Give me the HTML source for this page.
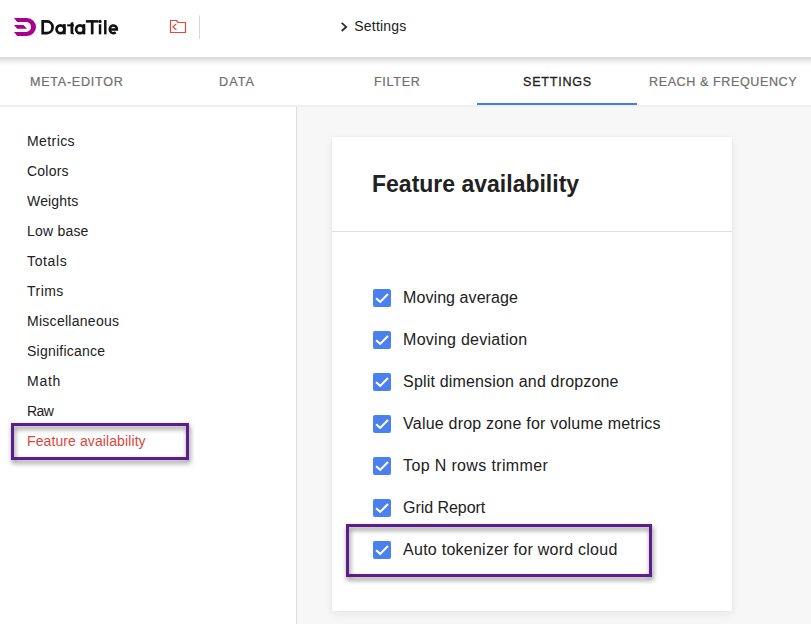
<!DOCTYPE html>
<html>
<head>
<meta charset="utf-8">
<title>DataTile Settings</title>
<style>
*{box-sizing:border-box;margin:0;padding:0}
html,body{width:811px;height:624px;overflow:hidden;background:#fff}
body{font-family:"Liberation Sans",sans-serif;color:#212121;position:relative;-webkit-font-smoothing:antialiased}
.abs{position:absolute;white-space:nowrap}
#header{position:absolute;left:0;top:0;width:811px;height:57px;background:#fff;z-index:5}
#hshadow{position:absolute;left:0;top:57px;width:811px;height:10px;z-index:4;background:linear-gradient(to bottom,rgba(0,0,0,.15) 0,rgba(0,0,0,.135) 1.5px,rgba(0,0,0,.095) 3px,rgba(0,0,0,.05) 5px,rgba(0,0,0,.02) 7px,rgba(0,0,0,.005) 9px,rgba(0,0,0,0) 10px)}
#tabs{position:absolute;left:0;top:57px;width:811px;height:48px;background:#fff;z-index:3}
#tabline{position:absolute;left:0;top:105px;width:811px;height:2px;background:#f0f0f0;z-index:3}
.tab{position:absolute;top:0;transform:translateY(.6px) scaleX(.93);transform-origin:0 0;height:48px;line-height:48px;font-size:13.5px;font-weight:normal;color:#6f6f6f;-webkit-text-stroke:.24px currentColor;letter-spacing:.75px;white-space:nowrap}
.tab.on{color:#212121;-webkit-text-stroke:.3px currentColor}
#ul{position:absolute;left:477px;top:46px;width:160px;height:2px;background:#3f7fec}
#side{position:absolute;left:0;top:107px;width:296px;height:517px;background:#fff}
#sideline{position:absolute;left:296px;top:107px;width:1px;height:517px;background:#dcdcdc}
#main{position:absolute;left:297px;top:107px;width:514px;height:517px;background:#f7f7f7}
.nav{position:absolute;left:27px;font-size:14px;line-height:20px;color:#212121;white-space:nowrap}
#panel{position:absolute;left:332px;top:137px;width:400px;height:474px;background:#fff;box-shadow:0 3px 10px rgba(0,0,0,.07),0 0 2px rgba(0,0,0,.05)}
#title{position:absolute;left:372px;top:170px;font-size:23px;font-weight:bold;line-height:28px;color:#212121;white-space:nowrap}
#hr{position:absolute;left:332px;top:231px;width:400px;height:1px;background:#e0e0e0}
.cb{position:absolute;left:373px;width:18px;height:18px;border-radius:2px;background:#4b80ef}
.cb svg{position:absolute;left:0;top:0}
.lbl{position:absolute;left:403.1px;font-size:16px;line-height:20px;color:#212121;white-space:nowrap}
.hl{position:absolute;border:3px solid #5c1e8b;filter:drop-shadow(1.5px 3px 2.5px rgba(0,0,0,.5))}
</style>
</head>
<body>
<div id="header">
  <svg class="abs" style="left:0;top:0" width="130" height="50" viewBox="0 0 130 50">
    <path d="M14 18 H27 A9 9 0 0 1 27 36 H17.1 L14 31.9 H26 A5 5 0 0 0 26 21.9 H17.1 Z" fill="#aa0090"/>
    <path d="M14 25 H23.5 L27.1 28.8 H17.1 Z" fill="#aa0090"/>
    <g fill="none" stroke="#111" stroke-width="2.7">
      <path d="M42.7 21.4 H47 A5.83 5.83 0 0 1 47 33.05 H42.7 Z"/>
      <circle cx="60.45" cy="29.2" r="3.9"/>
      <path d="M64.4 24.1 V34.35"/>
      <path d="M70.5 22.8 L73.3 22 V32.4 Q73.3 33.2 74 33.3 V34.35 H72.6 Q70.5 34.35 70.5 32.4 Z" fill="#111" stroke="none"/>
      <path d="M67.2 25.35 H73.9" stroke-width="2.1"/>
      <circle cx="80" cy="29.2" r="3.9"/>
      <path d="M83.95 24.1 V34.35"/>
      <path d="M85.9 21.35 H98.5" stroke-width="2.5"/>
      <path d="M92.2 20.1 V34.35" stroke-width="2.7"/>
      <path d="M100.05 24.2 V34.35" stroke-width="2.5"/>
      <path d="M105.3 20 V34.35" stroke-width="2.5"/>
      <path d="M109.7 29.4 H116.9 A3.6 3.9 0 1 0 115.6 32.3" stroke-width="2.5"/>
    </g>
    <circle cx="100.05" cy="21.45" r="1.6" fill="#111"/>
  </svg>
<div class="abs" id="logo" style="left:40px;top:15px;font-size:19.5px;line-height:24px;font-weight:bold;color:transparent">DataTile</div>
  <svg class="abs" style="left:169px;top:19px" width="18" height="15" viewBox="0 0 18 15">
    <path d="M1.5 1.5 H7.5 L9.2 3.5 H16.5 V13.5 H1.5 Z" fill="none" stroke="#dc4a38" stroke-width="1.2" stroke-linejoin="round"/>
    <path d="M7 5.1 L4 7.8 L7 10.6" fill="none" stroke="#dc4a38" stroke-width="1.2" stroke-linecap="round" stroke-linejoin="round"/>
  </svg>
  <div class="abs" style="left:199px;top:15px;width:1px;height:24px;background:#d8d8d8"></div>
  <svg class="abs" style="left:340px;top:21px" width="9" height="12" viewBox="0 0 9 12">
    <path d="M1.7 1.8 L6.2 5.9 L1.7 10" fill="none" stroke="#2b2b2b" stroke-width="1.8"/>
  </svg>
  <div class="abs m" id="crumb" style="left:354.3px;top:16px;font-size:14px;line-height:20px;color:#212121;letter-spacing:.2px">Settings</div>
</div>

<div id="hshadow"></div>
<div id="tabs">
  <div class="tab m" style="left:29.8px;letter-spacing:.8px">META-EDITOR</div>
  <div class="tab m" style="left:219px;letter-spacing:1.2px">DATA</div>
  <div class="tab m" style="left:374px">FILTER</div>
  <div class="tab on m" style="left:522.5px;letter-spacing:.83px">SETTINGS</div>
  <div class="tab m" style="left:648.7px;letter-spacing:.64px">REACH &amp; FREQUENCY</div>
  <div id="ul"></div>
</div>
<div id="tabline"></div>

<div id="side"></div>
<div id="sideline"></div>
<div id="main"></div>

<div class="nav m" style="top:131px;letter-spacing:0.41px">Metrics</div>
<div class="nav m" style="top:161px;letter-spacing:0.22px">Colors</div>
<div class="nav m" style="top:191px;letter-spacing:0.17px">Weights</div>
<div class="nav m" style="top:221px;letter-spacing:0.21px">Low base</div>
<div class="nav m" style="top:251px;letter-spacing:0.64px">Totals</div>
<div class="nav m" style="top:281px;letter-spacing:0.47px">Trims</div>
<div class="nav m" style="top:311px;letter-spacing:0.28px">Miscellaneous</div>
<div class="nav m" style="top:341px;letter-spacing:0.24px">Significance</div>
<div class="nav m" style="top:371px;letter-spacing:0.73px">Math</div>
<div class="nav m" style="top:401px;letter-spacing:-0.60px">Raw</div>
<div class="nav m" style="top:431px;color:#d9483b;letter-spacing:.1px">Feature availability</div>
<div class="hl" style="left:11px;top:423px;width:178px;height:37px"></div>

<div id="panel"></div>
<div id="title" class="m">Feature availability</div>
<div id="hr"></div>

<div class="cb" style="top:289px"><svg width="18" height="18" viewBox="0 0 18 18"><path d="M3.1 9.2 L7.2 12.9 L15 5" fill="none" stroke="#fff" stroke-width="2.1"/></svg></div>
<div class="lbl m" style="top:288px;letter-spacing:0.07px">Moving average</div>
<div class="cb" style="top:331px"><svg width="18" height="18" viewBox="0 0 18 18"><path d="M3.1 9.2 L7.2 12.9 L15 5" fill="none" stroke="#fff" stroke-width="2.1"/></svg></div>
<div class="lbl m" style="top:330px;letter-spacing:0.26px">Moving deviation</div>
<div class="cb" style="top:373px"><svg width="18" height="18" viewBox="0 0 18 18"><path d="M3.1 9.2 L7.2 12.9 L15 5" fill="none" stroke="#fff" stroke-width="2.1"/></svg></div>
<div class="lbl m" style="top:372px;letter-spacing:0.17px">Split dimension and dropzone</div>
<div class="cb" style="top:415px"><svg width="18" height="18" viewBox="0 0 18 18"><path d="M3.1 9.2 L7.2 12.9 L15 5" fill="none" stroke="#fff" stroke-width="2.1"/></svg></div>
<div class="lbl m" style="top:414px;letter-spacing:0.21px">Value drop zone for volume metrics</div>
<div class="cb" style="top:457px"><svg width="18" height="18" viewBox="0 0 18 18"><path d="M3.1 9.2 L7.2 12.9 L15 5" fill="none" stroke="#fff" stroke-width="2.1"/></svg></div>
<div class="lbl m" style="top:456px;letter-spacing:0.35px">Top N rows trimmer</div>
<div class="cb" style="top:499px"><svg width="18" height="18" viewBox="0 0 18 18"><path d="M3.1 9.2 L7.2 12.9 L15 5" fill="none" stroke="#fff" stroke-width="2.1"/></svg></div>
<div class="lbl m" style="top:498px;letter-spacing:-0.05px">Grid Report</div>
<div class="cb" style="top:541px"><svg width="18" height="18" viewBox="0 0 18 18"><path d="M3.1 9.2 L7.2 12.9 L15 5" fill="none" stroke="#fff" stroke-width="2.1"/></svg></div>
<div class="lbl m" style="top:540px;letter-spacing:0.25px">Auto tokenizer for word cloud</div>
<div class="hl" style="left:346px;top:524px;width:306px;height:53px"></div>
</body>
</html>
